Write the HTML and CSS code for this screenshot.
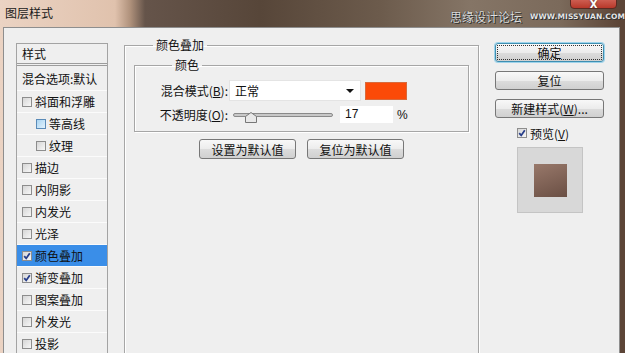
FILE: index.html
```html
<!DOCTYPE html>
<html lang="zh-CN">
<head>
  <meta charset="UTF-8">
  <title>图层样式</title>
  <link rel="stylesheet" href="styles.css">
</head>
<body>
  <div class="titlebar">
    <span class="title">图层样式</span>
    <span class="watermark">思缘设计论坛<small>WWW.MISSYUAN.COM</small></span>
    <span class="close">X</span>
  </div>

  <div class="client">
    <ul class="style-list">
      <li class="head">样式</li>
      <li class="blend">混合选项:默认</li>
      <li><span class="cb"></span>斜面和浮雕</li>
      <li class="sub"><span class="cb hover"></span>等高线</li>
      <li class="sub"><span class="cb"></span>纹理</li>
      <li><span class="cb"></span>描边</li>
      <li><span class="cb"></span>内阴影</li>
      <li><span class="cb"></span>内发光</li>
      <li><span class="cb"></span>光泽</li>
      <li class="active"><span class="cb"><svg viewBox="0 0 8 8"><path d="M1.2 4.2 L3.2 6.4 L6.8 1.2" /></svg></span>颜色叠加</li>
      <li><span class="cb"><svg viewBox="0 0 8 8"><path d="M1.2 4.2 L3.2 6.4 L6.8 1.2" /></svg></span>渐变叠加</li>
      <li><span class="cb"></span>图案叠加</li>
      <li><span class="cb"></span>外发光</li>
      <li><span class="cb"></span>投影</li>
    </ul>

    <fieldset class="group main">
      <legend>颜色叠加</legend>
      <fieldset class="group inner">
        <legend>颜色</legend>
        <div class="row">
          <label>混合模式(<u>B</u>):</label>
          <div class="select">正常<span class="arrow"></span></div>
          <span class="swatch"></span>
        </div>
        <div class="row">
          <label>不透明度(<u>O</u>):</label>
          <div class="slider">
            <svg class="thumb" viewBox="0 0 12 11"><path d="M0.5 10.5 V4.5 L6 0.5 L11.5 4.5 V10.5 Z" /></svg>
          </div>
          <span class="num">17</span>
          <span class="pct">%</span>
        </div>
      </fieldset>
      <div class="defaults">
        <button class="btn">设置为默认值</button>
        <button class="btn">复位为默认值</button>
      </div>
    </fieldset>

    <div class="side">
      <button class="btn focus"><span>确定</span></button>
      <button class="btn">复位</button>
      <button class="btn">新建样式(<u>W</u>)...</button>
      <div class="preview-check">
        <span class="cb"><svg viewBox="0 0 8 8"><path d="M1.2 4.2 L3.2 6.4 L6.8 1.2" /></svg></span>预览(<u>V</u>)
      </div>
      <div class="preview"><span></span></div>
    </div>
  </div>
</body>
</html>
```

FILE: styles.css
```css
* {
  box-sizing: border-box;
}
html, body {
  margin: 0;
}
body {
  width: 625px;
  height: 353px;
  overflow: hidden;
  font-family: "Noto Sans CJK SC", "Liberation Sans", sans-serif;
  font-size: 12px;
  color: #111;
  background: linear-gradient(90deg, #ebd3c3 0, #e0c2ad 115px, #b0927c 130px, #65544a 145px, #574639 260px, #6c5b4c 380px, #857566 470px, #7b6a5b 560px, #5c4537 620px);
}

/* title bar */
.titlebar {
  height: 27px;
  position: relative;
  display: flex;
  align-items: center;
  padding: 0 0 2px 5px;
}
.title {
  color: #1a1a1a;
  font-size: 12px;
}
.watermark {
  position: absolute;
  left: 450px;
  top: 8px;
  font-size: 12px;
  white-space: nowrap;
  color: #ddd;
  text-shadow: 0 0 1px #222, 1px 1px 0 #333;
  display: flex;
  align-items: center;
}
.watermark small {
  margin-left: 8px;
  font-family: "DejaVu Sans", sans-serif;
  font-weight: bold;
  font-size: 7.5px;
  letter-spacing: 0.1px;
  color: #e6e6e6;
}
.close {
  position: absolute;
  left: 570px;
  top: -5px;
  width: 47px;
  height: 14px;
  border-radius: 0 0 4px 4px;
  background: linear-gradient(#d87064, #b8382a);
  border: 1px solid #5a2a22;
  color: #fff;
  font: bold 10px "DejaVu Sans", sans-serif;
  text-align: center;
  line-height: 17px;
  text-shadow: 0 0 2px #333;
}

/* dialog body */
.client {
  margin: 0 5px 0 3px;
  height: 326px;
  overflow: hidden;
  background: #efefef;
  border: 1px solid #8e8e8e;
  border-bottom: none;
  display: flex;
  align-items: flex-start;
  padding: 9px 0 0 12px;
}

/* left style list */
.style-list {
  list-style: none;
  margin: 6px 0 0;
  padding: 0;
  width: 92px;
  height: 310px;
  overflow: hidden;
  border: 1px solid #a3a3a3;
  border-bottom: none;
  flex-shrink: 0;
}
.style-list li {
  height: 22px;
  display: flex;
  align-items: center;
  padding-left: 5px;
  border-top: 1px solid #fbfbfb;
  white-space: nowrap;
}
.style-list .head {
  height: 22px;
  border-top: none;
  border-bottom: 3px double #9c9c9c;
}
.style-list .blend {
  height: 24px;
  border-top: none;
}
.style-list .sub {
  padding-left: 19px;
}
.style-list .active {
  background: #3a8ee8;
}

.cb {
  width: 10px;
  height: 10px;
  margin-right: 3px;
  border: 1px solid #8d8d8d;
  background: linear-gradient(135deg, #d6d6d6, #f7f7f7);
  display: inline-flex;
  flex-shrink: 0;
}
.cb.hover {
  border-color: #5a8bb8;
  background: linear-gradient(135deg, #a9d4f2, #e2f2fc);
}
.cb svg {
  width: 8px;
  height: 8px;
  fill: none;
  stroke: #263d8a;
  stroke-width: 1.8;
}

/* group boxes */
.group {
  margin: 0;
  min-width: 0;
  border: 1px solid #a6a6a6;
  box-shadow: 1px 1px 0 #fff, inset 1px 1px 0 #fff;
}
.group legend {
  padding: 0 3px;
  line-height: 16px;
}
.main {
  margin-left: 16px;
  width: 355px;
  height: 320px;
  flex-shrink: 0;
  padding: 4px 9px 0;
}
.main > legend {
  margin-left: 19px;
}
.inner {
  padding: 7px 0 6px 20px;
}
.inner > legend {
  margin-left: 17px;
}

.row {
  display: flex;
  align-items: center;
  height: 21px;
}
.row + .row {
  margin-top: 3px;
}
.row label {
  width: 73px;
  text-align: right;
  white-space: nowrap;
}
.select {
  margin-left: 1px;
  width: 132px;
  height: 21px;
  background: #fff;
  border: 1px solid #e4e4e4;
  position: relative;
  padding-left: 5px;
  line-height: 19px;
}
.select .arrow {
  position: absolute;
  right: 6px;
  top: 8px;
  border: 4px solid transparent;
  border-top: 4px solid #111;
  border-bottom: none;
}
.swatch {
  margin-left: 4px;
  width: 42px;
  height: 18px;
  background: #fb4a08;
  border: 1px solid #d86a3c;
}
.slider {
  margin-left: 5px;
  width: 100px;
  height: 4px;
  border-radius: 2px;
  background: #c8c8c8;
  border: 1px solid #8a8a8a;
  position: relative;
}
.thumb {
  position: absolute;
  left: 11px;
  top: -2px;
  width: 12px;
  height: 11px;
  fill: #e8e8e8;
  stroke: #777;
  stroke-width: 1;
}
.num {
  margin-left: 7px;
  width: 53px;
  height: 17px;
  background: #fff;
  padding-left: 5px;
  line-height: 17px;
  font-family: "Liberation Sans", sans-serif;
}
.pct {
  margin-left: 4px;
  font-family: "Liberation Sans", sans-serif;
}

/* buttons */
.btn {
  font: inherit;
  color: #111;
  height: 20px;
  padding: 0;
  border: 1px solid #777;
  border-radius: 3px;
  background: linear-gradient(#f8f8f8 0, #ececec 50%, #dcdcdc 51%, #d0d0d0 100%);
  line-height: 17px;
}
.defaults {
  display: flex;
  justify-content: center;
  gap: 11px;
  margin-top: 7px;
}
.defaults .btn {
  width: 97px;
}

/* right column */
.side {
  margin: 6px 0 0 16px;
  width: 109px;
  display: flex;
  flex-direction: column;
}
.side .btn {
  width: 109px;
  height: 19px;
  margin-bottom: 9px;
  line-height: 16px;
}
.side .focus {
  border-color: #3e8fb2;
  box-shadow: 0 0 0 1px #9fd3ea;
  padding: 1px;
}
.side .focus span {
  display: block;
  height: 15px;
  line-height: 14px;
  border: 1px dotted #333;
}
.preview-check {
  display: flex;
  align-items: center;
  margin: -2px 0 0 22px;
  height: 16px;
}
.preview {
  margin: 6px 0 0 22px;
  width: 66px;
  height: 66px;
  background: #d8d8d8;
  border: 1px solid #c4c4c4;
  display: flex;
  align-items: center;
  justify-content: center;
}
.preview span {
  width: 33px;
  height: 33px;
  background: linear-gradient(160deg, #98786a, #6a4f44);
}
```
